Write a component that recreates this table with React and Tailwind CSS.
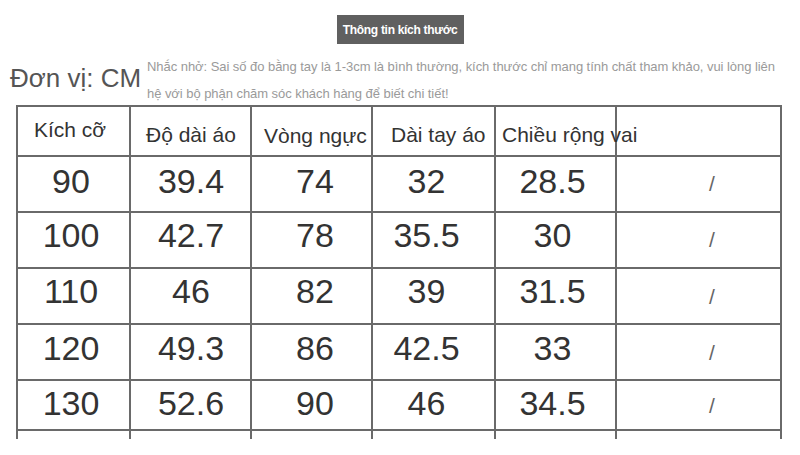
// Bảng kích thước — size chart screenshot
const font = { fontFamily: '"Liberation Sans", Arial, sans-serif' };

const COLS = 'grid-cols-[113px_121px_121px_123px_121px_165px]';

const headers = [
  { label: 'Kích cỡ', cls: 'pl-[16px] pt-[11px]' },
  { label: 'Độ dài áo', cls: 'pl-[15px] pt-[16px]' },
  { label: 'Vòng ngực', cls: 'pl-[12px] pt-[17px]' },
  { label: 'Dài tay áo', cls: 'pl-[18px] pt-[16px]' },
  { label: 'Chiều rộng vai', cls: 'pl-[6px] pt-[16px]' },
  { label: '', cls: '' },
];

const rows = [
  { h: 'h-[55.5px]', pb: 'pb-[6px]', vals: ['90', '39.4', '74', '32', '28.5'] },
  { h: 'h-[56.5px]', pb: 'pb-[10px]', vals: ['100', '42.7', '78', '35.5', '30'] },
  { h: 'h-[56px]', pb: 'pb-[11px]', vals: ['110', '46', '82', '39', '31.5'] },
  { h: 'h-[56px]', pb: 'pb-[9px]', vals: ['120', '49.3', '86', '42.5', '33'] },
  { h: 'h-[50px]', pb: 'pb-[5px]', vals: ['130', '52.6', '90', '46', '34.5'] },
];

// horizontal nudges per column, to match the picture
const colShift = ['pr-[5px]', 'pl-[1px]', 'pl-[7px]', 'pr-[14px]', 'pr-[6px]'];

export default function App() {
  return (
    <div className="w-[800px] h-[455px] bg-white overflow-hidden" style={font}>
      {/* Title badge */}
      <div className="flex justify-center pt-[15px]">
        <div className="h-[29px] w-[127px] bg-[#606060] text-white text-[12px] font-bold flex items-center justify-center tracking-[-0.3px]">
          Thông tin kích thước
        </div>
      </div>

      {/* Unit + reminder */}
      <div className="flex h-[61px]">
        <div className="w-[147px] pl-[10px] pt-[19px] text-[26px] leading-[30px] text-[#555] whitespace-nowrap">
          Đơn vị: CM
        </div>
        <div className="pt-[9px] text-[13px] leading-[27px] text-[#9a9a9a] whitespace-nowrap tracking-[-0.05px]">
          Nhắc nhở: Sai số đo bằng tay là 1-3cm là bình thường, kích thước chỉ mang tính chất tham khảo, vui lòng liên
          <br />
          hệ với bộ phận chăm sóc khách hàng để biết chi tiết!
        </div>
      </div>

      {/* Table */}
      <div className={`ml-[16px] w-[766px] grid ${COLS} border-l-2 border-t-2 border-[#6a6a6a] text-[#333]`}>
        {headers.map((c, i) => (
          <div
            key={i}
            className={`h-[50px] border-r-2 border-b-2 border-[#6a6a6a] text-[21px] leading-[24px] whitespace-nowrap overflow-visible ${c.cls}`}
          >
            {c.label}
          </div>
        ))}

        {rows.map((r, ri) => (
          <div key={ri} className="contents">
            {r.vals.map((v, ci) => (
              <div
                key={ci}
                className={`${r.h} ${r.pb} ${colShift[ci]} border-r-2 border-b-2 border-[#6a6a6a] flex items-center justify-center text-[34px] leading-[34px]`}
              >
                {v}
              </div>
            ))}
            <div className={`${r.h} pl-[27px] border-r-2 border-b-2 border-[#6a6a6a] flex items-center justify-center text-[21px] leading-[21px] text-[#666]`}>
              /
            </div>
          </div>
        ))}

        {[0, 1, 2, 3, 4, 5].map((i) => (
          <div key={i} className="h-[8px] border-r-2 border-[#6a6a6a]" />
        ))}
      </div>
    </div>
  );
}
